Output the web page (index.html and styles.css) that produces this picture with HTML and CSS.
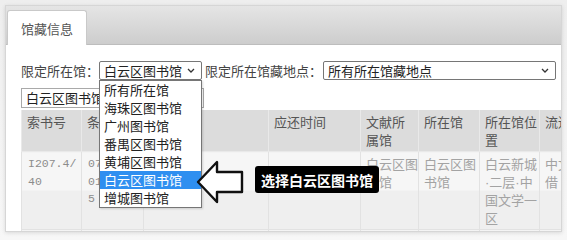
FILE: index.html
```html
<!DOCTYPE html>
<html lang="zh-CN">
<head>
<meta charset="utf-8">
<title>馆藏信息</title>
<link rel="stylesheet" href="styles.css">
</head>
<body>
<div class="frame">
  <div class="panel">
    <div class="tabbar"><div class="tab">馆藏信息</div></div>
    <div class="content">
      <div class="filters">
        <span class="label">限定所在馆：</span>
        <div class="select lib">
          <span>白云区图书馆</span>
          <svg class="chev" width="8" height="5" viewBox="0 0 8 5"><path d="M1 1l3 3 3-3" fill="none" stroke="#333" stroke-width="1.3"/></svg>
          <ul class="options">
            <li>所有所在馆</li>
            <li>海珠区图书馆</li>
            <li>广州图书馆</li>
            <li>番禺区图书馆</li>
            <li>黄埔区图书馆</li>
            <li class="active">白云区图书馆</li>
            <li>增城图书馆</li>
          </ul>
        </div>
        <span class="label second">限定所在馆藏地点：</span>
        <div class="select loc">
          <span>所有所在馆藏地点</span>
          <svg class="chev" width="8" height="5" viewBox="0 0 8 5"><path d="M1 1l3 3 3-3" fill="none" stroke="#333" stroke-width="1.3"/></svg>
        </div>
      </div>
      <div class="search"><div class="input">白云区图书馆</div></div>
      <table class="holdings">
        <colgroup>
          <col class="c1"><col class="c2"><col class="c3"><col class="c4"><col class="c5"><col class="c6"><col class="c7"><col class="c8">
        </colgroup>
        <thead>
          <tr>
            <th>索书号</th>
            <th>条码号</th>
            <th>题名</th>
            <th>应还时间</th>
            <th>文献所<br>属馆</th>
            <th>所在馆</th>
            <th>所在馆位<br>置</th>
            <th>流通状态</th>
          </tr>
        </thead>
        <tbody>
          <tr>
            <td class="mono">I207.4/<br>40</td>
            <td class="mono">07041<br>01012<br>5</td>
            <td></td>
            <td></td>
            <td>白云区图<br>书馆</td>
            <td>白云区图<br>书馆</td>
            <td>白云新城<br><span class="dot">·</span>二层<span class="dot">·</span>中<br>国文学一<br>区</td>
            <td>中文外<br>借</td>
          </tr>
          <tr class="next">
            <td></td><td></td><td></td><td></td><td></td><td></td><td></td><td></td>
          </tr>
        </tbody>
      </table>
    </div>
    <svg class="arrow" width="50" height="46" viewBox="0 0 50 46">
      <path d="M2 23 L21 3 L21 13 L46 13 L46 33 L21 33 L21 43 Z" fill="#fff" stroke="#111" stroke-width="2.4" stroke-linejoin="round"/>
    </svg>
    <div class="callout">选择白云区图书馆</div>
  </div>
</div>
</body>
</html>
```
FILE: styles.css
```css
* { box-sizing: border-box; }
body {
  margin: 0;
  background: #fff;
  font-family: "Noto Sans CJK SC", "Noto Sans", sans-serif;
  font-size: 13px;
  color: #444;
}
.frame {
  width: 567px;
  height: 240px;
  padding: 5px;
  background: linear-gradient(#eeeeee, #f7f7f7);
}
.panel {
  position: relative;
  width: 557px;
  height: 227px;
  overflow: hidden;
  background: #fff;
  border: 1px solid #d6d6d6;
  box-shadow: 0 1px 4px rgba(0, 0, 0, 0.12);
}
.tabbar {
  height: 39px;
  padding: 4px 0 0 1px;
  display: flex;
  align-items: flex-end;
  background: linear-gradient(#e5e5e5, #cdcdcd);
  border-bottom: 1px solid #bdbdbd;
}
.tab {
  width: 80px;
  height: 35px;
  margin-bottom: -1px;
  padding-left: 13px;
  display: flex;
  align-items: center;
  background: #fff;
  border: 1px solid #c9c9c9;
  border-bottom: none;
  border-radius: 3px 3px 0 0;
  color: #555;
}
.content {
  padding: 16px 0 0 15px;
}
.filters {
  display: flex;
  align-items: center;
  height: 19px;
}
.label {
  color: #444;
  line-height: 19px;
  white-space: nowrap;
}
.label.second { margin-left: 3px; }
.select {
  position: relative;
  height: 19px;
  padding: 0 6px 0 4px;
  display: flex;
  align-items: center;
  justify-content: space-between;
  border: 1px solid #767676;
  border-radius: 2px;
  background: #fff;
  color: #222;
  line-height: 17px;
}
.select.lib { width: 103px; }
.select.loc { width: 233px; margin-left: 1px; }
.options {
  position: absolute;
  z-index: 5;
  top: 18px;
  left: -1px;
  width: 103px;
  margin: 0;
  padding: 0;
  list-style: none;
  background: #fff;
  border: 1px solid #767676;
  box-shadow: 1px 1px 2px rgba(0, 0, 0, 0.15);
}
.options li {
  height: 18px;
  line-height: 18px;
  padding-left: 4px;
  color: #222;
  white-space: nowrap;
}
.options li.active {
  background: #2f8ff0;
  color: #fff;
}
.search {
  margin-top: 8px;
}
.input {
  width: 183px;
  height: 20px;
  padding-left: 4px;
  line-height: 18px;
  border: 1px solid #a9a9a9;
  color: #222;
}
.holdings {
  margin-top: 2px;
  width: 578px;
  table-layout: fixed;
  border-collapse: collapse;
}
.c1 { width: 60px; }
.c2 { width: 62px; }
.c3 { width: 125px; }
.c4 { width: 92px; }
.c5 { width: 58px; }
.c6 { width: 61px; }
.c7 { width: 60px; }
.c8 { width: 60px; }
.holdings th {
  height: 41px;
  padding: 3px 0 3px 5px;
  text-align: left;
  vertical-align: top;
  font-weight: normal;
  line-height: 17.5px;
  color: #555;
  background: #dcdcdc;
  border: 1px solid #e9e9e9;
  border-top: none;
  white-space: nowrap;
}
.holdings td {
  height: 77px;
  padding: 3px 0 3px 5px;
  vertical-align: top;
  line-height: 17.5px;
  color: #a3a3a3;
  background: linear-gradient(#f6f6f6 0 50%, #efefef 50% 100%);
  border: 1px solid #e2e2e2;
  white-space: nowrap;
}
.holdings td.mono {
  padding-left: 6px;
  font-family: "Liberation Mono", "DejaVu Sans Mono", monospace;
  font-size: 11.5px;
  color: #8c8c8c;
}
.dot {
  font-family: "Liberation Sans", sans-serif;
}
.holdings tr.next td {
  height: 10px;
  background: #f4f4f4;
}
.arrow {
  position: absolute;
  left: 190px;
  top: 153px;
  z-index: 6;
}
.callout {
  position: absolute;
  left: 249px;
  top: 160px;
  z-index: 6;
  width: 124px;
  height: 27px;
  display: flex;
  align-items: center;
  justify-content: center;
  background: #000;
  border-radius: 3px;
  color: #fff;
  font-weight: bold;
  font-size: 14px;
  white-space: nowrap;
}
```
